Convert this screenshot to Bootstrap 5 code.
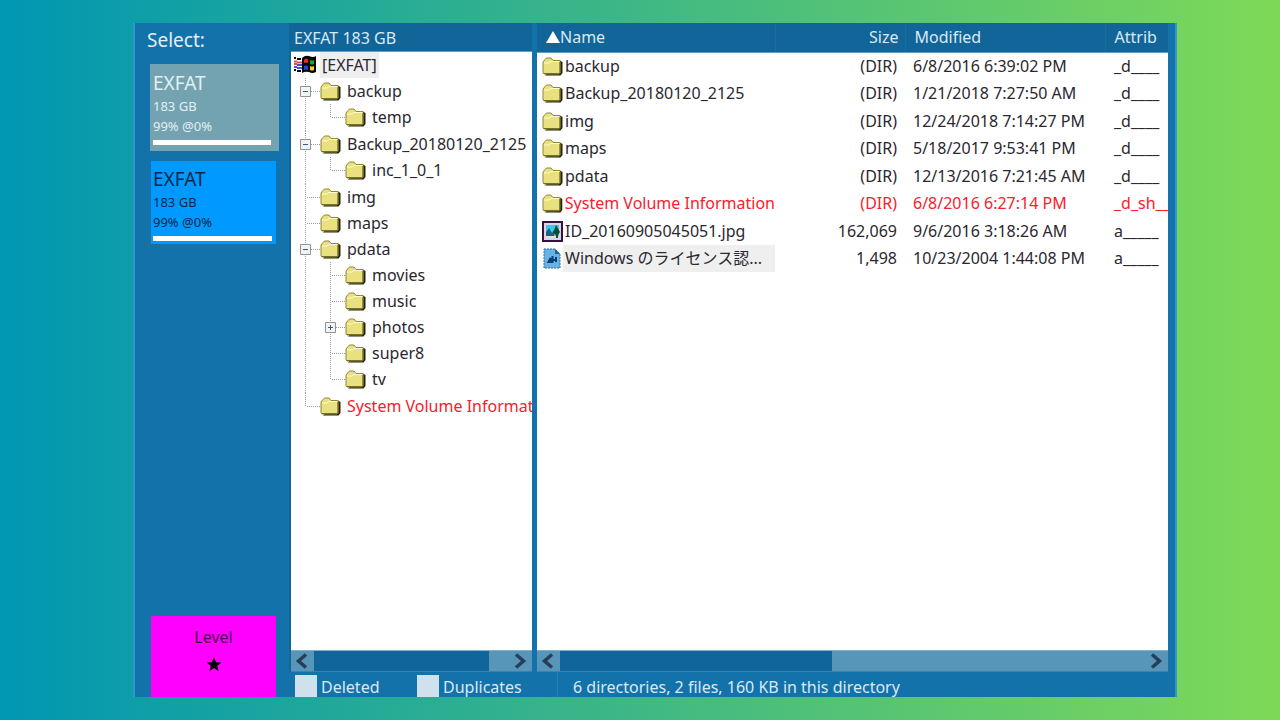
<!DOCTYPE html>
<html lang="en">
<head>
<meta charset="utf-8">
<meta name="viewport" content="width=device-width, initial-scale=1">
<title>EXFAT 183 GB</title>
<link href="https://cdn.jsdelivr.net/npm/bootstrap@5.3.0/dist/css/bootstrap.min.css" rel="stylesheet">
<style>
  :root { --pane: #1472aa; --head: #126598; --track: #5796b9; --ink: #2b2730; }
  body {
    padding: 23px 103px 23px 133px;
    background: linear-gradient(90deg, #0097b2, #7ed957);
    font-family: "Noto Sans", "Noto Sans CJK JP", sans-serif;
    font-size: 16px; line-height: 26px; color: var(--ink);
  }
  button { font: inherit; color: inherit; border: 0; padding: 0; background: none; }
  .app { min-height: calc(100vh - 46px); background: var(--pane); border: solid #2e98cb; border-width: 0 2px; padding-right: 7px; }
  .side { width: 154px; padding-left: 12px; color: #e3eff6; }
  .side h1 { font-size: 19px; line-height: 34px; margin: 0 0 7px; }
  .drive { width: 125px; height: 83px; margin: 0 0 0 4px; padding: 5px 4px 3px 2px; background: #09f; color: #06284a; font-size: 13px; line-height: 20px; text-align: left; }
  .drive strong { font-size: 19px; line-height: 26px; font-weight: 400; }
  .drive.active { width: 129px; height: 87px; padding: 5px 8px 5px 3px; margin: 0 0 10px 3px; background: #73a3b0; color: #e4eff3; }
  .usage { height: 5px; background: #fff; margin-top: 4px; }
  .level { width: 125px; height: 81px; margin-left: 4px; padding-bottom: 14px; background: #f0f; color: #4a0050; }
  .panes { margin-left: 2px; }
  .tree { width: 241px; box-shadow: -2px 0 var(--head); background: var(--head); }
  .files { margin-left: 5px; background: #fff; }
  .pane-head { background: var(--head); color: #d9e9f3; height: 29px; border-bottom: 1px solid #5fa0c6; line-height: 30px; padding-left: 3px; }
  .tree-body { background: #fff; overflow: hidden; white-space: nowrap; }
  .root { height: 26px; padding-left: 3px; }
  .root span { background: #efefef; margin-left: 3px; padding: 0 2px; }
  .tree li {
    background:
      repeating-linear-gradient(#999 0 1px, #fff 1px 2px) 14px 0 / 1px 100% no-repeat,
      repeating-linear-gradient(90deg, #999 0 1px, #fff 1px 2px) 14px 13px / 15px 1px no-repeat;
  }
  .tree li:last-child { background-size: 1px 14px, 15px 1px; }
  .tree li ul { padding: 0 0 1px 25px; }
  .knot { width: 29px; height: 26px; padding-left: 9px; }
  .knot button { width: 11px; height: 11px; }
  .knot svg { display: block; }
  .label { padding-left: 6px; }
  .hidden-item { color: #f8202b; }
  .scroll { height: 22px; background: var(--track); border: solid #82b0ca; border-width: 1px 0; border-bottom-color: #3984b2; }
  .scroll button { width: 23px; height: 20px; }
  .thumb { background: #10669b; }
  .files table { table-layout: fixed; line-height: 27px; color: inherit; white-space: nowrap; }
  .files th { background: var(--head); color: #d9e9f3; font-weight: 400; height: 29px; padding: 0 6px 0 9px; line-height: 28px; border-bottom: 1px solid #5fa0c6; border-right: 1px solid #1b6ca0; }
  .files th:last-child { border-right: 0; }
  .files td { padding: 0 0 0 8px; height: 27px; overflow: hidden; }
  .files tbody tr:nth-child(odd) td { height: 28px; }
  .files td.size { padding: 0 8px 0 0; }
  .files td:first-child { padding-left: 5px; }
  .files td:last-child { padding-left: 9px; }
  .entry { flex: 1; padding-left: 2px; }
  .picked { background: #efefef; }
  .foot { height: 25px; color: #d9e9f3; line-height: 30px; padding-left: 4px; }
  .foot .form-check-input { width: 22px; height: 22px; margin: 3px 4px 0 0; border: 0; border-radius: 0; background-color: #cfe1ec; }
  .tally { border-left: 1px solid #2b7db0; padding-left: 15px; }
</style>
</head>
<body>
<svg width="0" height="0" class="position-absolute" aria-hidden="true">
  <symbol id="folder" viewBox="0 0 21 19">
    <path d="M3 18.500h15.500L20.500 16V5L18 3.500z" fill="#26240f"/>
    <path d="M1 16V5l2-2.500L4.500 1H9l2 2.500h7V16l-1 1H2z" fill="#e9e080" stroke="#8e8837"/>
    <path d="M2 6h5l2-1.500h8.500" fill="none" stroke="#fffbd0"/>
    <path d="M2 16.500h16V5" fill="none" stroke="#777027"/>
  </symbol>
  <symbol id="minus" viewBox="0 0 11 11"><path d="M.5.5h10v10H.5z" fill="#f3f3f3" stroke="#929292"/><path d="M3 5.500h5" stroke="#315f91"/></symbol>
  <symbol id="plus" viewBox="0 0 11 11"><path d="M.5.5h10v10H.5z" fill="#f3f3f3" stroke="#929292"/><path d="M3 5.500h5M5.500 3v5" stroke="#315f91"/></symbol>
  <symbol id="prev" viewBox="0 0 23 20"><path d="M15 3.500 7.500 10l7.500 6.500" fill="none" stroke="#263f58" stroke-width="3.500"/></symbol>
  <symbol id="next" viewBox="0 0 23 20"><path d="M7 3.500 14.500 10 7 16.500" fill="none" stroke="#263f58" stroke-width="3.500"/></symbol>
</svg>
<main class="app d-flex">
  <aside class="side d-flex flex-column flex-shrink-0">
    <h1 class="fw-normal">Select:</h1>
    <button type="button" class="drive active"><strong class="d-block">EXFAT</strong><span class="d-block">183 GB</span><span class="d-block">99% @0%</span><span class="usage d-block"></span></button>
    <button type="button" class="drive"><strong class="d-block">EXFAT</strong><span class="d-block">183 GB</span><span class="d-block">99% @0%</span><span class="usage d-block"></span></button>
    <button type="button" class="level mt-auto">Level<svg class="d-block mx-auto" width="16" height="26" viewBox="0 0 16 26"><path d="m8 7 2 5.300 5.500.2-4.400 3.400 1.600 5.300L8 18.100l-4.700 3.100 1.600-5.300L.5 12.500l5.500-.2z" fill="#000"/></svg></button>
  </aside>
  <div class="panes d-flex flex-column flex-grow-1">
    <div class="d-flex flex-grow-1">
      <section class="tree d-flex flex-column flex-shrink-0">
        <div class="pane-head">EXFAT 183 GB</div>
        <div class="tree-body flex-grow-1">
          <div class="root d-flex align-items-center">
            <svg width="23" height="20" viewBox="0 0 23 20">
              <path d="M8 3q3-3 7-2 4 2 7 0v16q-4 2-7 0-4-1-7 1z" fill="#080808"/>
              <path d="M10 5q2-2 4-1v4q-2-1-4 0z" fill="#e82c20"/><path d="M16 5q2 1 4 0v4q-2 1-4 0z" fill="#17a82c"/>
              <path d="M10 11q2-1 4 0v4q-2-1-4 0z" fill="#1c48d8"/><path d="M16 11q2 1 4 0v4q-2 1-4 0z" fill="#f0d51b"/>
              <path d="M0 3h2m1 1h4M0 15h2m1 1h4" stroke="#080808" stroke-width="2"/>
              <path d="M0 6.500h3m0 1h5M0 9h3" stroke="#e34c4b" stroke-width="2"/>
              <path d="M3 10h5M0 12h3m0 1h5" stroke="#4a54cf" stroke-width="2"/>
            </svg><span>[EXFAT]</span>
          </div>
          <ul class="list-unstyled mb-0">
            <li><div class="d-flex align-items-center"><div class="knot d-flex align-items-center"><button type="button" aria-label="Collapse backup"><svg width="11" height="11"><use href="#minus"/></svg></button></div><svg width="21" height="19"><use href="#folder"/></svg><span class="label">backup</span></div>
              <ul class="list-unstyled"><li><div class="d-flex align-items-center"><div class="knot"></div><svg width="21" height="19"><use href="#folder"/></svg><span class="label">temp</span></div></li></ul></li>
            <li><div class="d-flex align-items-center"><div class="knot d-flex align-items-center"><button type="button" aria-label="Collapse Backup_20180120_2125"><svg width="11" height="11"><use href="#minus"/></svg></button></div><svg width="21" height="19"><use href="#folder"/></svg><span class="label">Backup_20180120_2125</span></div>
              <ul class="list-unstyled"><li><div class="d-flex align-items-center"><div class="knot"></div><svg width="21" height="19"><use href="#folder"/></svg><span class="label">inc_1_0_1</span></div></li></ul></li>
            <li><div class="d-flex align-items-center"><div class="knot"></div><svg width="21" height="19"><use href="#folder"/></svg><span class="label">img</span></div></li>
            <li><div class="d-flex align-items-center"><div class="knot"></div><svg width="21" height="19"><use href="#folder"/></svg><span class="label">maps</span></div></li>
            <li><div class="d-flex align-items-center"><div class="knot d-flex align-items-center"><button type="button" aria-label="Collapse pdata"><svg width="11" height="11"><use href="#minus"/></svg></button></div><svg width="21" height="19"><use href="#folder"/></svg><span class="label">pdata</span></div>
              <ul class="list-unstyled">
                <li><div class="d-flex align-items-center"><div class="knot"></div><svg width="21" height="19"><use href="#folder"/></svg><span class="label">movies</span></div></li>
                <li><div class="d-flex align-items-center"><div class="knot"></div><svg width="21" height="19"><use href="#folder"/></svg><span class="label">music</span></div></li>
                <li><div class="d-flex align-items-center"><div class="knot d-flex align-items-center"><button type="button" aria-label="Expand photos"><svg width="11" height="11"><use href="#plus"/></svg></button></div><svg width="21" height="19"><use href="#folder"/></svg><span class="label">photos</span></div></li>
                <li><div class="d-flex align-items-center"><div class="knot"></div><svg width="21" height="19"><use href="#folder"/></svg><span class="label">super8</span></div></li>
                <li><div class="d-flex align-items-center"><div class="knot"></div><svg width="21" height="19"><use href="#folder"/></svg><span class="label">tv</span></div></li>
              </ul></li>
            <li><div class="d-flex align-items-center"><div class="knot flex-shrink-0"></div><svg class="flex-shrink-0" width="21" height="19"><use href="#folder"/></svg><span class="label hidden-item">System Volume Informat</span></div></li>
          </ul>
        </div>
        <div class="scroll d-flex"><button type="button" aria-label="Scroll left"><svg class="d-block" width="23" height="20"><use href="#prev"/></svg></button><div class="thumb" style="width:175px"></div><button type="button" class="ms-auto" aria-label="Scroll right"><svg class="d-block" width="23" height="20"><use href="#next"/></svg></button></div>
      </section>
      <section class="files d-flex flex-column flex-grow-1">
        <table class="w-100">
          <colgroup><col><col style="width:130px"><col style="width:200px"><col style="width:63px"></colgroup>
          <thead><tr><th><button type="button" class="d-flex align-items-center"><svg width="14" height="12" viewBox="0 0 14 12"><path d="M7 0l7 12H0z" fill="#fff"/></svg>Name</button></th><th class="text-end">Size</th><th>Modified</th><th>Attrib</th></tr></thead>
          <tbody>
            <tr><td><div class="d-flex align-items-center"><svg width="21" height="19"><use href="#folder"/></svg><span class="entry">backup</span></div></td><td class="size text-end">(DIR)</td><td>6/8/2016 6:39:02 PM</td><td>_d____</td></tr>
            <tr><td><div class="d-flex align-items-center"><svg width="21" height="19"><use href="#folder"/></svg><span class="entry">Backup_20180120_2125</span></div></td><td class="size text-end">(DIR)</td><td>1/21/2018 7:27:50 AM</td><td>_d____</td></tr>
            <tr><td><div class="d-flex align-items-center"><svg width="21" height="19"><use href="#folder"/></svg><span class="entry">img</span></div></td><td class="size text-end">(DIR)</td><td>12/24/2018 7:14:27 PM</td><td>_d____</td></tr>
            <tr><td><div class="d-flex align-items-center"><svg width="21" height="19"><use href="#folder"/></svg><span class="entry">maps</span></div></td><td class="size text-end">(DIR)</td><td>5/18/2017 9:53:41 PM</td><td>_d____</td></tr>
            <tr><td><div class="d-flex align-items-center"><svg width="21" height="19"><use href="#folder"/></svg><span class="entry">pdata</span></div></td><td class="size text-end">(DIR)</td><td>12/13/2016 7:21:45 AM</td><td>_d____</td></tr>
            <tr class="hidden-item"><td><div class="d-flex align-items-center"><svg width="21" height="19"><use href="#folder"/></svg><span class="entry">System Volume Information</span></div></td><td class="size text-end">(DIR)</td><td>6/8/2016 6:27:14 PM</td><td>_d_sh__</td></tr>
            <tr><td><div class="d-flex align-items-center"><svg width="21" height="21" viewBox="0 0 21 21"><path d="M1 1h19v19H1z" fill="#ddd3e4" stroke="#35123f" stroke-width="2"/><path d="M4 4h13v13H4z" fill="#38c9e8"/><path d="M4 11l3-4 3 5 2-3v8H4z" fill="#1b637b"/><path d="M4 15h13v2H4z" fill="#d8e6dd"/><path d="M14 4l4 7-2 3v3h-2v-3l-3-2z" fill="#084b28"/></svg><span class="entry">ID_20160905045051.jpg</span></div></td><td class="size text-end">162,069</td><td>9/6/2016 3:18:26 AM</td><td>a_____</td></tr>
            <tr><td><div class="d-flex align-items-center"><svg width="21" height="21" viewBox="0 0 21 21"><path d="M2 1h11l5 5v14H2z" fill="#69b3e4" stroke="#2870a8" stroke-dasharray="2 1"/><path d="M13 1v5h5z" fill="#246092"/><path d="M6.500 14l2-4v4zm4-6v7m0-3h3.500v-3m0 0v5" fill="none" stroke="#0c3d76" stroke-width="2"/></svg><span class="entry picked">Windows <span lang="ja">のライセンス認</span>...</span></div></td><td class="size text-end">1,498</td><td>10/23/2004 1:44:08 PM</td><td>a_____</td></tr>
          </tbody>
        </table>
        <div class="scroll d-flex mt-auto"><button type="button" aria-label="Scroll left"><svg class="d-block" width="23" height="20"><use href="#prev"/></svg></button><div class="thumb" style="width:272px"></div><button type="button" class="ms-auto" aria-label="Scroll right"><svg class="d-block" width="23" height="20"><use href="#next"/></svg></button></div>
      </section>
    </div>
    <footer class="foot d-flex overflow-hidden">
      <div class="d-flex" style="width:122px"><input class="form-check-input" type="checkbox" id="deleted"><label for="deleted">Deleted</label></div>
      <div class="d-flex" style="width:140px"><input class="form-check-input" type="checkbox" id="dupes"><label for="dupes">Duplicates</label></div>
      <div class="tally">6 directories, 2 files, 160 KB in this directory</div>
    </footer>
  </div>
</main>
<script src="https://cdn.jsdelivr.net/npm/bootstrap@5.3.0/dist/js/bootstrap.bundle.min.js"></script>
</body>
</html>
